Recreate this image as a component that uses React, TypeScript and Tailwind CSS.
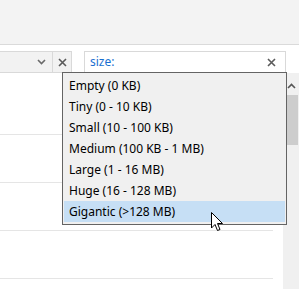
import React from "react";

const items = [
  "Empty (0 KB)",
  "Tiny (0 - 10 KB)",
  "Small (10 - 100 KB)",
  "Medium (100 KB - 1 MB)",
  "Large (1 - 16 MB)",
  "Huge (16 - 128 MB)",
  "Gigantic (>128 MB)",
];

function XIcon({ className = "" }: { className?: string }) {
  return (
    <svg width="9" height="9" viewBox="0 0 9 9" className={className}>
      <path d="M1 1 L8 8 M8 1 L1 8" stroke="#5a5a5a" strokeWidth="1.6" />
    </svg>
  );
}

export default function App() {
  return (
    <div
      className="relative w-[299px] h-[289px] overflow-hidden bg-white"
      style={{ fontFamily: '"Noto Sans", "Open Sans", sans-serif' }}
    >
      <div className="h-[45px] bg-[#f3f3f3] border-b border-[#dadada]" />
      <div className="flex items-start pt-[6px] h-[28px]">
        <div className="flex h-[22px] w-[73px] -ml-px border border-[#d9d9d9] bg-[#f2f2f2]">
          <div className="flex-1 flex items-center justify-end pr-[6px]">
            <svg width="9" height="6" viewBox="0 0 9 6">
              <path d="M1 1 L4.5 4.5 L8 1" stroke="#6a6a6a" strokeWidth="1.6" fill="none" />
            </svg>
          </div>
          <div className="w-[19px] border-l border-[#d9d9d9] flex items-center justify-center">
            <XIcon />
          </div>
        </div>
        <div className="ml-[12px] flex h-[22px] w-[202px] items-center border border-[#d9d9d9] bg-white pl-[5px] pr-[9px]">
          <span className="flex-1 text-[12px] text-[#1a6fd0] leading-none">size:</span>
          <XIcon />
        </div>
      </div>
      <div className="flex">
        <div className="w-[273px]">
          <div className="h-[62px] border-b border-[#e5e5e5]" />
          <div className="h-[48px] border-b border-[#e5e5e5]" />
          <div className="h-[48px] border-b border-[#e5e5e5]" />
          <div className="h-[48px] border-b border-[#e5e5e5]" />
        </div>
        <div className="ml-[10px] w-[16px] h-[220px] bg-[#f0f0f0] flex flex-col items-center pt-[10px]">
          <svg width="9" height="6" viewBox="0 0 9 6">
            <path d="M1 5 L4.5 1.5 L8 5" stroke="#555" strokeWidth="1.6" fill="none" />
          </svg>
          <div className="mt-[6px] w-[12px] ml-[2px] h-[50px] bg-[#cdcdcd]" />
        </div>
      </div>

      <div className="absolute left-[62px] top-[72px] w-[225px] h-[153px] border border-[#646464] bg-[#f0f0f0] pt-[2px] px-[1px]">
        {items.map((t, i) => (
          <div
            key={t}
            className={`h-[21px] flex items-center pl-[5px] text-[12px] text-black leading-none ${
              i === items.length - 1 ? "bg-[#c6dff5]" : ""
            }`}
          >
            {t}
          </div>
        ))}
      </div>

      <svg
        className="absolute left-[211px] top-[212px]"
        width="13"
        height="20"
        viewBox="0 0 13 20"
      >
        <path
          d="M0.5 0.5 L0.5 16 L4 12.5 L6.5 18.5 L9 17.5 L6.5 11.5 L11.5 11.5 Z"
          fill="white"
          stroke="black"
          strokeWidth="1"
          strokeLinejoin="miter"
        />
      </svg>
    </div>
  );
}
